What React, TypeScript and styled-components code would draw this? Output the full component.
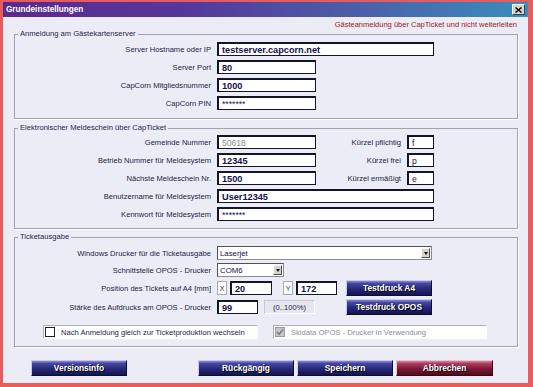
import React from "react";
import styled, { createGlobalStyle } from "styled-components";

const GlobalStyle = createGlobalStyle`
  html, body {
    margin: 0;
    padding: 0;
    background: #ffffff;
  }
  body {
    font-family: "Liberation Sans", Arial, sans-serif;
  }
`;

const Window = styled.div`
  width: 533px;
  height: 387px;
  box-sizing: border-box;
  border-style: solid;
  border-color: #e95b5b;
  border-width: 2px 5px 4px 3px;
  background: #ececf6;
  display: flex;
  flex-direction: column;
`;

const TitleBar = styled.div`
  height: 15px;
  flex: none;
  display: flex;
  align-items: center;
  justify-content: space-between;
  padding: 0 3px 0 3px;
  background: linear-gradient(90deg, #5b2a8c 0%, #55389a 35%, #4a62aa 70%, #3a8dbd 100%);
  color: #ffffff;
  font-weight: bold;
  font-size: 8.2px;
`;

const CloseButton = styled.div`
  width: 13px;
  height: 11px;
  box-sizing: border-box;
  background: #d6d3cc;
  border: 1px solid;
  border-color: #ffffff #404040 #404040 #ffffff;
  display: flex;
  align-items: center;
  justify-content: center;
`;

const Body = styled.div`
  flex: 1;
  padding: 3px 10px 0 11px;
  display: flex;
  flex-direction: column;
`;

const Subtitle = styled.div`
  text-align: right;
  color: #a01818;
  font-size: 7.5px;
  line-height: 9px;
  padding-right: 1px;
`;

const Group = styled.fieldset<{ $top?: number; $padTop: number; $padBottom: number }>`
  margin: ${(p) => p.$top ?? 0}px 0 0 0;
  padding: ${(p) => p.$padTop}px 0 ${(p) => p.$padBottom}px 0;
  border: 1px solid #a2a2ae;
  box-shadow: 1px 1px 0 #ffffff;
  min-width: 0;
`;

const Legend = styled.legend`
  margin-left: 3px;
  padding: 0 2px;
  font-size: 7.6px;
  line-height: 10px;
  color: #1e1e46;
`;

const FieldGrid = styled.div`
  display: grid;
  grid-template-columns: 196px 99px 79px 27px;
  column-gap: 6px;
  row-gap: 4px;
  align-items: center;
`;

const PrinterGrid = styled.div`
  display: grid;
  grid-template-columns: 196px 123px 86px;
  column-gap: 6px;
  row-gap: 3px;
  align-items: center;
`;

const Label = styled.div`
  text-align: right;
  white-space: nowrap;
  font-size: 7.6px;
  color: #1c1c44;
`;

const Field = styled.input<{ $span?: number; $bold?: boolean; $muted?: boolean; $w?: number }>`
  grid-column: span ${(p) => p.$span ?? 1};
  box-sizing: border-box;
  width: ${(p) => (p.$w ? `${p.$w}px` : "100%")};
  height: 14px;
  margin: 0;
  padding: 0 3px;
  background: #ffffff;
  border: 1px solid #15152a;
  border-top-width: 2px;
  border-left-width: 2px;
  font-family: "Liberation Sans", Arial, sans-serif;
  font-size: ${(p) => (p.$bold ? "9.2px" : "8.6px")};
  font-weight: ${(p) => (p.$bold ? "bold" : "normal")};
  color: ${(p) => (p.$muted ? "#8a8a90" : "#121250")};
  outline: none;
`;

const Select = styled.div<{ $span?: number; $w?: number }>`
  grid-column: span ${(p) => p.$span ?? 1};
  box-sizing: border-box;
  width: ${(p) => (p.$w ? `${p.$w}px` : "100%")};
  height: 14px;
  display: flex;
  align-items: center;
  background: #ffffff;
  border: 1px solid #8a8a96;
  border-top-color: #50505a;
  border-left-color: #50505a;
  font-size: 7.8px;
  color: #121240;
  padding-left: 2px;
`;

const SelectText = styled.span`
  flex: 1;
`;

const SelectArrow = styled.div`
  width: 9px;
  height: 10px;
  margin-right: 1px;
  box-sizing: border-box;
  background: #d6d3cc;
  border: 1px solid;
  border-color: #ffffff #505050 #505050 #ffffff;
  display: flex;
  align-items: center;
  justify-content: center;
  &::after {
    content: "";
    border-left: 2.5px solid transparent;
    border-right: 2.5px solid transparent;
    border-top: 3px solid #111111;
  }
`;

const Inline = styled.div<{ $gap: number }>`
  display: flex;
  align-items: center;
  gap: ${(p) => p.$gap}px;
`;

const AxisTag = styled.div<{ $shift?: number }>`
  width: 10px;
  height: 14px;
  margin-left: ${(p) => p.$shift ?? 0}px;
  box-sizing: border-box;
  background: #ffffff;
  border: 1px solid #a8a8b8;
  display: flex;
  align-items: center;
  justify-content: center;
  font-size: 7px;
  color: #2a2a66;
`;

const RangeHint = styled.div`
  width: 51px;
  height: 14px;
  box-sizing: border-box;
  border: 1px solid #ffffff;
  border-top-color: #c6c6d0;
  border-left-color: #c6c6d0;
  background: #e6e6f0;
  display: flex;
  align-items: center;
  justify-content: center;
  font-size: 7.6px;
  color: #1e1e50;
`;

const Button = styled.div<{ $danger?: boolean; $w?: number }>`
  width: ${(p) => p.$w ?? 96}px;
  height: 16px;
  box-sizing: border-box;
  display: flex;
  align-items: center;
  justify-content: center;
  color: #ffffff;
  font-weight: bold;
  font-size: 8.4px;
  text-shadow: 1px 1px 0 #000000;
  border: 1px solid;
  border-color: ${(p) => (p.$danger ? "#f0c0cc #3a0614 #3a0614 #f0c0cc" : "#c8c8ec #0c0c34 #0c0c34 #c8c8ec")};
  background: ${(p) =>
    p.$danger
      ? "linear-gradient(180deg, #d88aa2 0%, #a8405e 18%, #7c1a38 55%, #4e0a20 100%)"
      : "linear-gradient(180deg, #8c8cd0 0%, #46469e 18%, #28287a 55%, #14144c 100%)"};
`;

const CheckRow = styled.div`
  display: flex;
  gap: 15px;
  margin: 10px 0 0 28px;
`;

const CheckBox = styled.div<{ $w: number; $disabled?: boolean }>`
  width: ${(p) => p.$w}px;
  height: 14px;
  box-sizing: border-box;
  display: flex;
  align-items: center;
  gap: 6px;
  padding-left: 1px;
  background: #ffffff;
  border: 1px solid #ffffff;
  border-top-color: #b0b0bc;
  border-left-color: #b0b0bc;
  font-size: 7.6px;
  color: ${(p) => (p.$disabled ? "#8c8c94" : "#1e1e46")};
`;

const Tick = styled.div<{ $disabled?: boolean }>`
  width: 10px;
  height: 10px;
  box-sizing: border-box;
  border: 1px solid ${(p) => (p.$disabled ? "#9a9aa2" : "#202030")};
  background: ${(p) => (p.$disabled ? "#c8c8cc" : "#ffffff")};
  display: flex;
  align-items: center;
  justify-content: center;
`;

const ButtonBar = styled.div`
  display: flex;
  gap: 3px;
  margin-top: 13px;
  padding: 0 25px 0 17px;
`;

const Spacer = styled.div`
  flex: 1;
`;

const Grundeinstellungen = () => {
  return (
    <Window>
      <TitleBar>
        <span>Grundeinstellungen</span>
        <CloseButton>
          <svg width="7" height="6" viewBox="0 0 7 6">
            <path d="M0.5 0.5 L6.5 5.5 M6.5 0.5 L0.5 5.5" stroke="#000" strokeWidth="1.4" />
          </svg>
        </CloseButton>
      </TitleBar>
      <Body>
        <Subtitle>Gästeanmeldung über CapTicket und nicht weiterleiten</Subtitle>

        <Group $padTop={3} $padBottom={8}>
          <Legend>Anmeldung am Gästekartenserver</Legend>
          <FieldGrid>
            <Label>Server Hostname oder IP</Label>
            <Field $span={3} $bold readOnly value="testserver.capcorn.net" />
            <Label>Server Port</Label>
            <Field $bold readOnly value="80" />
            <div />
            <div />
            <Label>CapCorn Mitgliedsnummer</Label>
            <Field $bold readOnly value="1000" />
            <div />
            <div />
            <Label>CapCorn PIN</Label>
            <Field readOnly value="*******" />
          </FieldGrid>
        </Group>

        <Group $top={4} $padTop={2} $padBottom={7}>
          <Legend>Elektronischer Meldeschein über CapTicket</Legend>
          <FieldGrid>
            <Label>Gemeinde Nummer</Label>
            <Field $muted readOnly value="50618" />
            <Label>Kürzel pflichtig</Label>
            <Field readOnly value="f" />
            <Label>Betrieb Nummer für Meldesystem</Label>
            <Field $bold readOnly value="12345" />
            <Label>Kürzel frei</Label>
            <Field readOnly value="p" />
            <Label>Nächste Meldeschein Nr.</Label>
            <Field $bold readOnly value="1500" />
            <Label>Kürzel ermäßigt</Label>
            <Field readOnly value="e" />
            <Label>Benutzername für Meldesystem</Label>
            <Field $span={3} $bold readOnly value="User12345" />
            <Label>Kennwort für Meldesystem</Label>
            <Field $span={3} readOnly value="*******" />
          </FieldGrid>
        </Group>

        <Group $top={3} $padTop={4} $padBottom={7}>
          <Legend>Ticketausgabe</Legend>
          <PrinterGrid>
            <Label>Windows Drucker für die Ticketausgabe</Label>
            <Select $span={2}>
              <SelectText>Laserjet</SelectText>
              <SelectArrow />
            </Select>
            <Label>Schnittstelle OPOS - Drucker</Label>
            <Select $w={67}>
              <SelectText>COM6</SelectText>
              <SelectArrow />
            </Select>
            <div />
            <Label>Position des Tickets auf A4 [mm]</Label>
            <Inline $gap={3}>
              <AxisTag>X</AxisTag>
              <Field $bold $w={42} readOnly value="20" />
              <AxisTag $shift={8}>Y</AxisTag>
              <Field $bold $w={41} readOnly value="172" />
            </Inline>
            <Button $w={86}>Testdruck A4</Button>
            <Label>Stärke des Aufdrucks am OPOS - Drucker</Label>
            <Inline $gap={6}>
              <Field $bold $w={41} readOnly value="99" />
              <RangeHint>(0..100%)</RangeHint>
            </Inline>
            <Button $w={86}>Testdruck OPOS</Button>
          </PrinterGrid>
          <CheckRow>
            <CheckBox $w={215}>
              <Tick />
              Nach Anmeldung gleich zur Ticketproduktion wechseln
            </CheckBox>
            <CheckBox $w={214} $disabled>
              <Tick $disabled>
                <svg width="8" height="8" viewBox="0 0 8 8">
                  <path d="M1 4 L3 6.2 L7 1.5" stroke="#7a7a80" strokeWidth="1.6" fill="none" />
                </svg>
              </Tick>
              Skidata OPOS - Drucker in Verwendung
            </CheckBox>
          </CheckRow>
        </Group>

        <ButtonBar>
          <Button>Versionsinfo</Button>
          <Spacer />
          <Button>Rückgängig</Button>
          <Button>Speichern</Button>
          <Button $danger $w={97}>Abbrechen</Button>
        </ButtonBar>
      </Body>
    </Window>
  );
};

export default function App() {
  return (
    <>
      <GlobalStyle />
      <Grundeinstellungen />
    </>
  );
}
